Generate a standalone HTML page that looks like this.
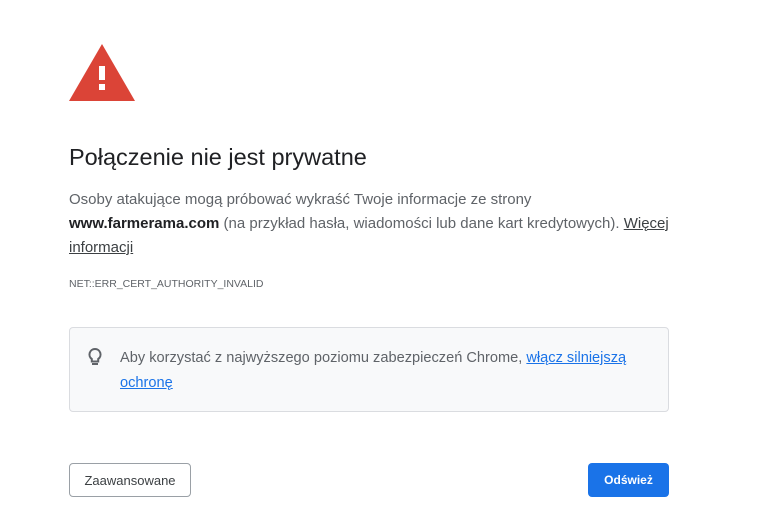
<!DOCTYPE html>
<html><head><meta charset="utf-8"><style>
body{margin:0;background:#fff;font-family:"Liberation Sans",sans-serif;color:#202124;width:758px;height:516px;overflow:hidden;position:relative}
.a{position:absolute}
p{margin:0}
.body{left:69px;top:188px;width:600px;font-size:15px;line-height:24px;color:#5f6368}
.body b{color:#202124}
u{color:#3c4043}
.box{left:69px;top:327px;width:598px;height:83px;border:1px solid #dadce0;border-radius:4px;background:#f8f9fa}
.btn{border-radius:4px;font-size:13px;text-align:center;line-height:34px;height:34px}
</style></head><body>
<svg class="a" style="left:69px;top:44px" width="66" height="58" viewBox="0 0 66 58">
<polygon points="33,0 66,57 0,57" fill="#db4437"/>
<rect x="30" y="22" width="6" height="14" fill="#fff"/>
<rect x="30" y="40" width="6" height="6" fill="#fff"/>
</svg>
<div class="a" style="left:69px;top:144px;font-size:23.5px;color:#202124">Połączenie nie jest prywatne</div>
<div class="a body"><p>Osoby atakujące mogą próbować wykraść Twoje informacje ze strony <b>www.farmerama.com</b> (na przykład hasła, wiadomości lub dane kart kredytowych). <u>Więcej informacji</u></p></div>
<div class="a" style="left:69px;top:278px;font-size:10.5px;color:#5f6368">NET::ERR_CERT_AUTHORITY_INVALID</div>
<div class="a box">
<svg class="a" style="left:17px;top:19px" width="16" height="20" viewBox="0 0 16 20"><path d="M8 2a5.5 5.5 0 0 0-3.2 10v2.5h6.4V12A5.5 5.5 0 0 0 8 2z" fill="none" stroke="#5f6368" stroke-width="2"/><rect x="5" y="16" width="6" height="2" fill="#5f6368"/></svg>
<div class="a" style="left:50px;top:18px;width:530px;font-size:14.6px;line-height:25px;color:#5f6368">Aby korzystać z najwyższego poziomu zabezpieczeń Chrome, <u style="color:#1a73e8">włącz silniejszą ochronę</u></div>
</div>
<div class="a btn" style="left:69px;top:463px;width:120px;border:1px solid #9aa0a6;height:32px;line-height:34px;color:#3c4043">Zaawansowane</div>
<div class="a btn" style="left:588px;top:463px;width:81px;background:#1a73e8;color:#fff;font-weight:bold;font-size:12px">Odśwież</div>
</body></html>
